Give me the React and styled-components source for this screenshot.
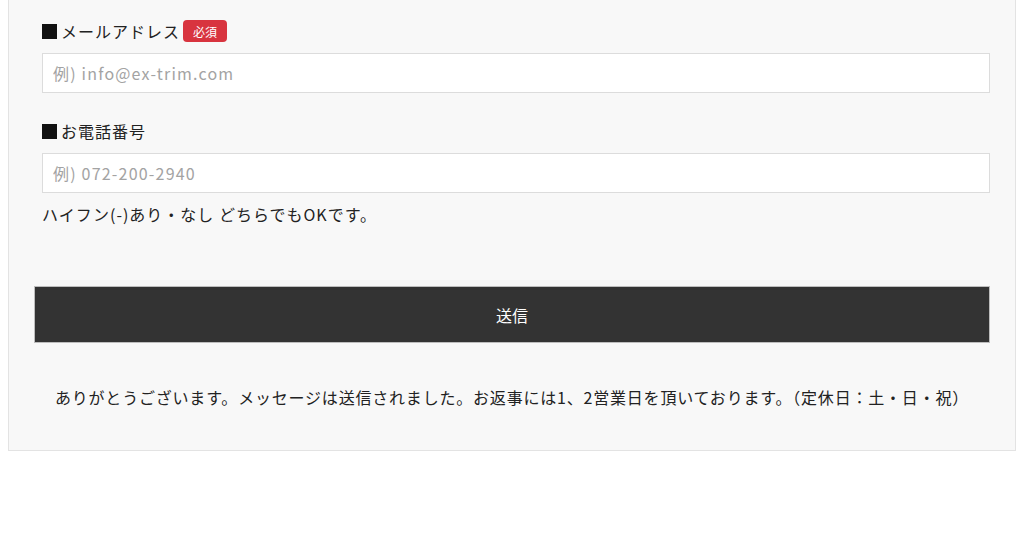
import styled, { createGlobalStyle } from 'styled-components';

const GlobalStyle = createGlobalStyle`
  body {
    margin: 0;
    background: #ffffff;
    font-family: "Noto Sans CJK JP", "Noto Sans", sans-serif;
    color: #222;
  }
  * { box-sizing: border-box; }
`;

const Panel = styled.div`
  margin: 0 8px;
  padding: 20px 25px 41px;
  background: #f8f8f8;
  border: 1px solid #e3e3e3;
  border-top: none;
`;

const Field = styled.div`
  padding-left: 8px;
  margin-bottom: ${props => props.last ? '0' : '27px'};
`;

const Label = styled.div`
  display: flex;
  align-items: center;
  height: 22px;
  margin-bottom: 11px;
  font-size: 16px;
  letter-spacing: 1px;
  color: #222;
`;

const Mark = styled.span`
  display: inline-block;
  width: 15px;
  height: 15px;
  margin: 0 4px 0 0;
  background: #111;
`;

const Badge = styled.span`
  display: inline-flex;
  align-items: center;
  height: 22px;
  margin-left: 3px;
  padding: 0 10px;
  border-radius: 4px;
  background: #d8343f;
  color: #fff;
  font-size: 12px;
  letter-spacing: 0;
`;

const Input = styled.input`
  display: block;
  width: 100%;
  height: 40px;
  padding: 0 10px;
  border: 1px solid #dcdcdc;
  background: #fff;
  font-family: inherit;
  font-size: 16px;
  letter-spacing: 1.2px;
  color: #333;
  outline: none;

  &::placeholder {
    color: #a3a3a3;
  }
`;

const Hint = styled.p`
  margin: 10px 0 0;
  line-height: 22px;
  font-size: 16px;
  letter-spacing: 1px;
  color: #222;
`;

const SubmitButton = styled.button`
  display: block;
  width: 100%;
  height: 57px;
  margin-top: 61px;
  border: 1px solid #bdbdbd;
  background: #333333;
  color: #fff;
  font-family: inherit;
  font-size: 16px;
  cursor: pointer;
`;

const Message = styled.p`
  margin: 42px 0 0;
  line-height: 24px;
  text-align: center;
  font-size: 16px;
  letter-spacing: 0.8px;
  color: #222;
`;

const App = () => {
  return (
    <>
      <GlobalStyle />
      <Panel>
        <Field>
          <Label><Mark />メールアドレス<Badge>必須</Badge></Label>
          <Input type="email" placeholder="例) info@ex-trim.com" />
        </Field>
        <Field last>
          <Label><Mark />お電話番号</Label>
          <Input type="tel" placeholder="例) 072-200-2940" />
          <Hint>ハイフン(-)あり・なし どちらでもOKです。</Hint>
        </Field>
        <SubmitButton type="submit">送信</SubmitButton>
        <Message>
          ありがとうございます。メッセージは送信されました。お返事には1、2営業日を頂いております。（定休日：土・日・祝）
        </Message>
      </Panel>
    </>
  );
};

export default App;
